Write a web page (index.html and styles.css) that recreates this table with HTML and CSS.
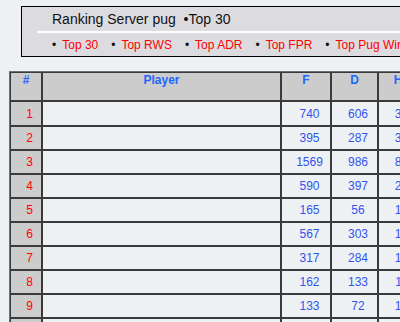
FILE: index.html
```html
<!DOCTYPE html>
<html lang="en">
<head>
<meta charset="utf-8">
<title>Ranking Server pug - Top 30</title>
<link rel="stylesheet" href="styles.css">
</head>
<body>
<div class="page">
  <div class="banner">
    <div class="banner-inner">
      <div class="title">Ranking Server pug&nbsp;&nbsp;•Top 30</div>
      <div class="links">
        <span class="link"><span class="dot">•</span><a href="#">Top 30</a></span>
        <span class="link"><span class="dot">•</span><a href="#">Top RWS</a></span>
        <span class="link"><span class="dot">•</span><a href="#">Top ADR</a></span>
        <span class="link"><span class="dot">•</span><a href="#">Top FPR</a></span>
        <span class="link"><span class="dot">•</span><a href="#">Top Pug Win's</a></span>
      </div>
    </div>
  </div>

  <table class="rank">
    <thead>
      <tr>
        <th class="c-num">#</th>
        <th class="c-player">Player</th>
        <th class="c-f">F</th>
        <th class="c-d">D</th>
        <th class="c-h">H</th>
        <th class="c-x">K/D</th>
      </tr>
    </thead>
    <tbody>
      <tr><td class="num">1</td><td></td><td>740</td><td>606</td><td>38</td><td>1.22</td></tr>
      <tr><td class="num">2</td><td></td><td>395</td><td>287</td><td>35</td><td>1.38</td></tr>
      <tr><td class="num">3</td><td></td><td>1569</td><td>986</td><td>84</td><td>1.59</td></tr>
      <tr><td class="num">4</td><td></td><td>590</td><td>397</td><td>29</td><td>1.49</td></tr>
      <tr><td class="num">5</td><td></td><td>165</td><td>56</td><td>12</td><td>2.95</td></tr>
      <tr><td class="num">6</td><td></td><td>567</td><td>303</td><td>17</td><td>1.87</td></tr>
      <tr><td class="num">7</td><td></td><td>317</td><td>284</td><td>14</td><td>1.12</td></tr>
      <tr><td class="num">8</td><td></td><td>162</td><td>133</td><td>11</td><td>1.22</td></tr>
      <tr><td class="num">9</td><td></td><td>133</td><td>72</td><td>13</td><td>1.85</td></tr>
      <tr><td class="num">10</td><td></td><td>120</td><td>98</td><td>10</td><td>1.22</td></tr>
    </tbody>
  </table>
</div>
</body>
</html>
```

FILE: styles.css
```css
html, body {
  margin: 0;
  padding: 0;
  background: #edf1f4;
  overflow: hidden;
}

body {
  font-family: "Liberation Sans", Arial, sans-serif;
  font-size: 12px;
  color: #000;
}

.page {
  width: 720px;
  padding: 6px 0 0 9px;
}

.banner {
  margin-left: 12px;
  border: 1px solid #000;
  background: #dcdce0;
}

.banner-inner {
  margin-left: 15px;
}

.title {
  padding: 4px 0 4px 15px;
  font-size: 14px;
  line-height: 16px;
  color: #111;
  border-bottom: 2px solid #fff;
}

.links {
  display: flex;
  gap: 13px;
  padding: 5px 0 4px 15px;
  line-height: 14px;
  white-space: nowrap;
}

.link {
  display: inline-flex;
}

.dot {
  margin-right: 6px;
  color: #111;
}

.link a {
  color: #ff0000;
  text-decoration: none;
}

.rank {
  margin-top: 14px;
  border-collapse: separate;
  border-spacing: 0;
  border: 1px solid #6e6e6e;
  border-right: none;
  border-bottom: none;
}

.rank th,
.rank td {
  box-sizing: border-box;
  border: 1px solid #3a3a3a;
  padding: 0;
}

.rank th {
  height: 29px;
  background: #cccccc;
  color: #2166ff;
  font-weight: bold;
  font-size: 12px;
  line-height: 14px;
  text-align: center;
  vertical-align: top;
}

.c-num { width: 32px; }
.c-player { width: 239px; }
.c-f { width: 50px; }
.c-d { width: 47px; }
.c-h { width: 40px; }
.c-x { width: 50px; }

.rank td {
  height: 24px;
  padding-left: 7px;
  background: #edf1f4;
  color: #3353ec;
  text-align: center;
  vertical-align: middle;
  line-height: 14px;
}

.rank tbody tr:first-child td {
  height: 25px;
}

.rank td.num {
  background: #cccccc;
  color: #ff0000;
}
```
